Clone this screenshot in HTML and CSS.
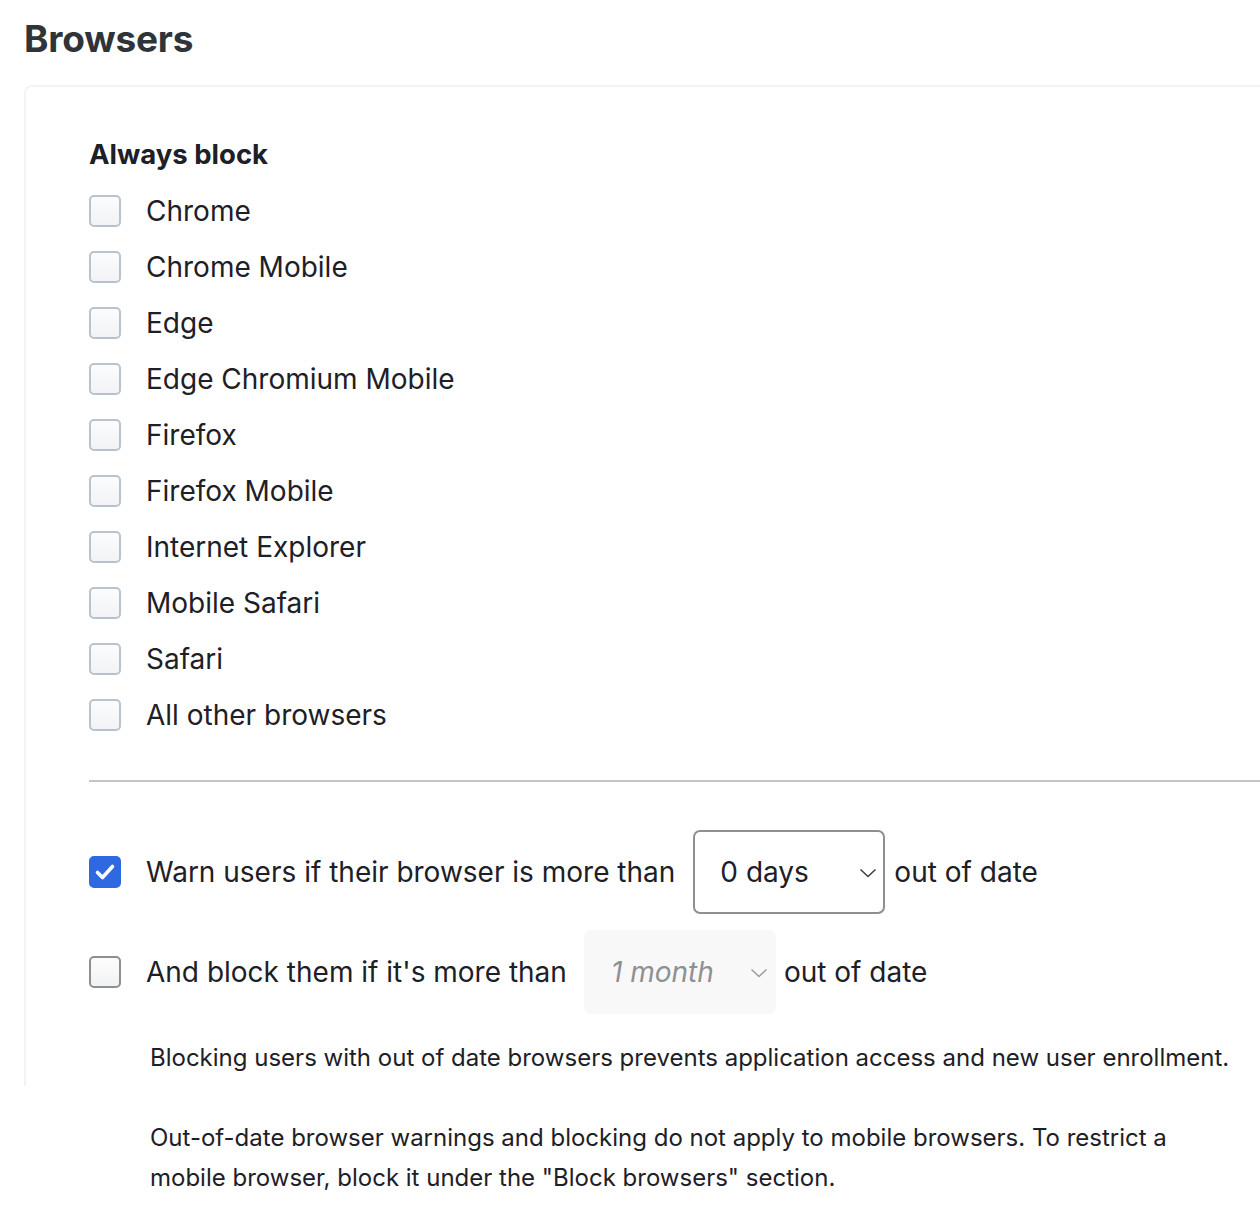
FILE: index.html
```html
<!DOCTYPE html>
<html>
<head>
<meta charset="utf-8">
<link rel="stylesheet" href="styles.css">
</head>
<body>
<h1 class="title">Browsers</h1>
<div class="card">
  <h2 class="group-title">Always block</h2>
  <ul class="list">
    <li class="row"><span class="cb"></span><span class="label">Chrome</span></li>
    <li class="row"><span class="cb"></span><span class="label">Chrome Mobile</span></li>
    <li class="row"><span class="cb"></span><span class="label">Edge</span></li>
    <li class="row"><span class="cb"></span><span class="label">Edge Chromium Mobile</span></li>
    <li class="row"><span class="cb"></span><span class="label">Firefox</span></li>
    <li class="row"><span class="cb"></span><span class="label">Firefox Mobile</span></li>
    <li class="row"><span class="cb"></span><span class="label">Internet Explorer</span></li>
    <li class="row"><span class="cb"></span><span class="label">Mobile Safari</span></li>
    <li class="row"><span class="cb"></span><span class="label">Safari</span></li>
    <li class="row"><span class="cb"></span><span class="label">All other browsers</span></li>
  </ul>
  <hr class="divider">
  <div class="opt warn">
    <span class="cb checked"><svg viewBox="0 0 32 32" width="32" height="32"><path d="M8.5 16.5l5 5 10-11" fill="none" stroke="#fff" stroke-width="3.6" stroke-linecap="round" stroke-linejoin="round"/></svg></span>
    <span class="label">Warn users if their browser is more than</span>
    <span class="select"><span class="sel-text">0 days</span><svg class="chev" viewBox="0 0 18 10" width="18" height="10"><path d="M1.5 1.5l7.5 7 7.5-7" fill="none" stroke="#3a3d42" stroke-width="1.5"/></svg></span>
    <span class="label">out of date</span>
  </div>
  <div class="opt block">
    <span class="cb dark"></span>
    <span class="label">And block them if it's more than</span>
    <span class="select disabled"><span class="sel-text">1 month</span><svg class="chev" viewBox="0 0 18 10" width="18" height="10"><path d="M1.5 1.5l7.5 7 7.5-7" fill="none" stroke="#9a9ca0" stroke-width="1.5"/></svg></span>
    <span class="label">out of date</span>
  </div>
</div>
<div class="notes">
  <p>Blocking users with out of date browsers prevents application access and new user enrollment.</p>
  <p>Out-of-date browser warnings and blocking do not apply to mobile browsers. To restrict a mobile browser, block it under the "Block browsers" section.</p>
</div>
</body>
</html>
```
FILE: styles.css
```css
* { box-sizing: border-box; }
html, body { margin: 0; padding: 0; background: #fff; }
body {
  font-family: Inter, "Noto Sans", sans-serif;
  color: #1d2026;
  width: 1260px;
  overflow: hidden;
}
.title {
  margin: 0;
  padding: 16px 0 0 24px;
  font-size: 37px;
  font-weight: 700;
  line-height: 46px;
  color: #2f3439;
  letter-spacing: -0.2px;
}
.card {
  margin: 23px 0 0 24px;
  border-top: 2px solid #f4f4f4;
  border-left: 2px solid #f4f4f4;
  border-top-left-radius: 8px;
  padding: 50px 0 72px 63px;
}
.group-title {
  margin: 0 0 12px 0;
  font-size: 27.5px;
  font-weight: 700;
  line-height: 34px;
  color: #1d2026;
}
.list { list-style: none; margin: 0; padding: 0; }
.row {
  display: flex;
  align-items: center;
  height: 56px;
}
.cb {
  flex: none;
  width: 32px;
  height: 32px;
  border: 2px solid #b9c3cd;
  border-radius: 5px;
  background: linear-gradient(#fbfcfd, #f1f3f6);
  display: inline-flex;
}
.cb.dark { border-color: #8e8f92; background: linear-gradient(#fdfdfd, #f1f2f4); }
.cb.checked { background: #2f69e1; border-color: #2f69e1; }
.cb.checked svg { margin: -2px; }
.label {
  font-size: 28px;
  line-height: 34px;
  color: #1d2026;
}
.row .label { margin-left: 25px; }
.divider {
  border: 0;
  height: 2px;
  background: #c3c5c8;
  margin: 37px 0 0 0;
}
.opt {
  display: flex;
  align-items: center;
}
.opt .cb { margin-right: 25px; }
.warn { margin-top: 48px; }
.block { margin-top: 16px; }
.select {
  flex: none;
  display: inline-flex;
  align-items: center;
  justify-content: space-between;
  width: 192px;
  height: 84px;
  border: 2px solid #8c8f94;
  border-radius: 7px;
  padding: 0 6px 0 25px;
  margin: 0 9px 0 18px;
}
.sel-text { font-size: 28px; line-height: 34px; color: #1d2026; }
.select.disabled {
  border-color: #f8f8f9;
  background: #f8f8f9;
  margin: 0 8px 0 17px;
}
.select.disabled .sel-text { font-style: italic; color: #8d9095; }
.chev { margin-top: 2px; }
.notes {
  padding-left: 150px;
  margin-top: -48px;
}
.notes p {
  margin: 0 0 40px 0;
  font-size: 24px;
  line-height: 40px;
  color: #1d2026;
  width: 1090px;
}
```
